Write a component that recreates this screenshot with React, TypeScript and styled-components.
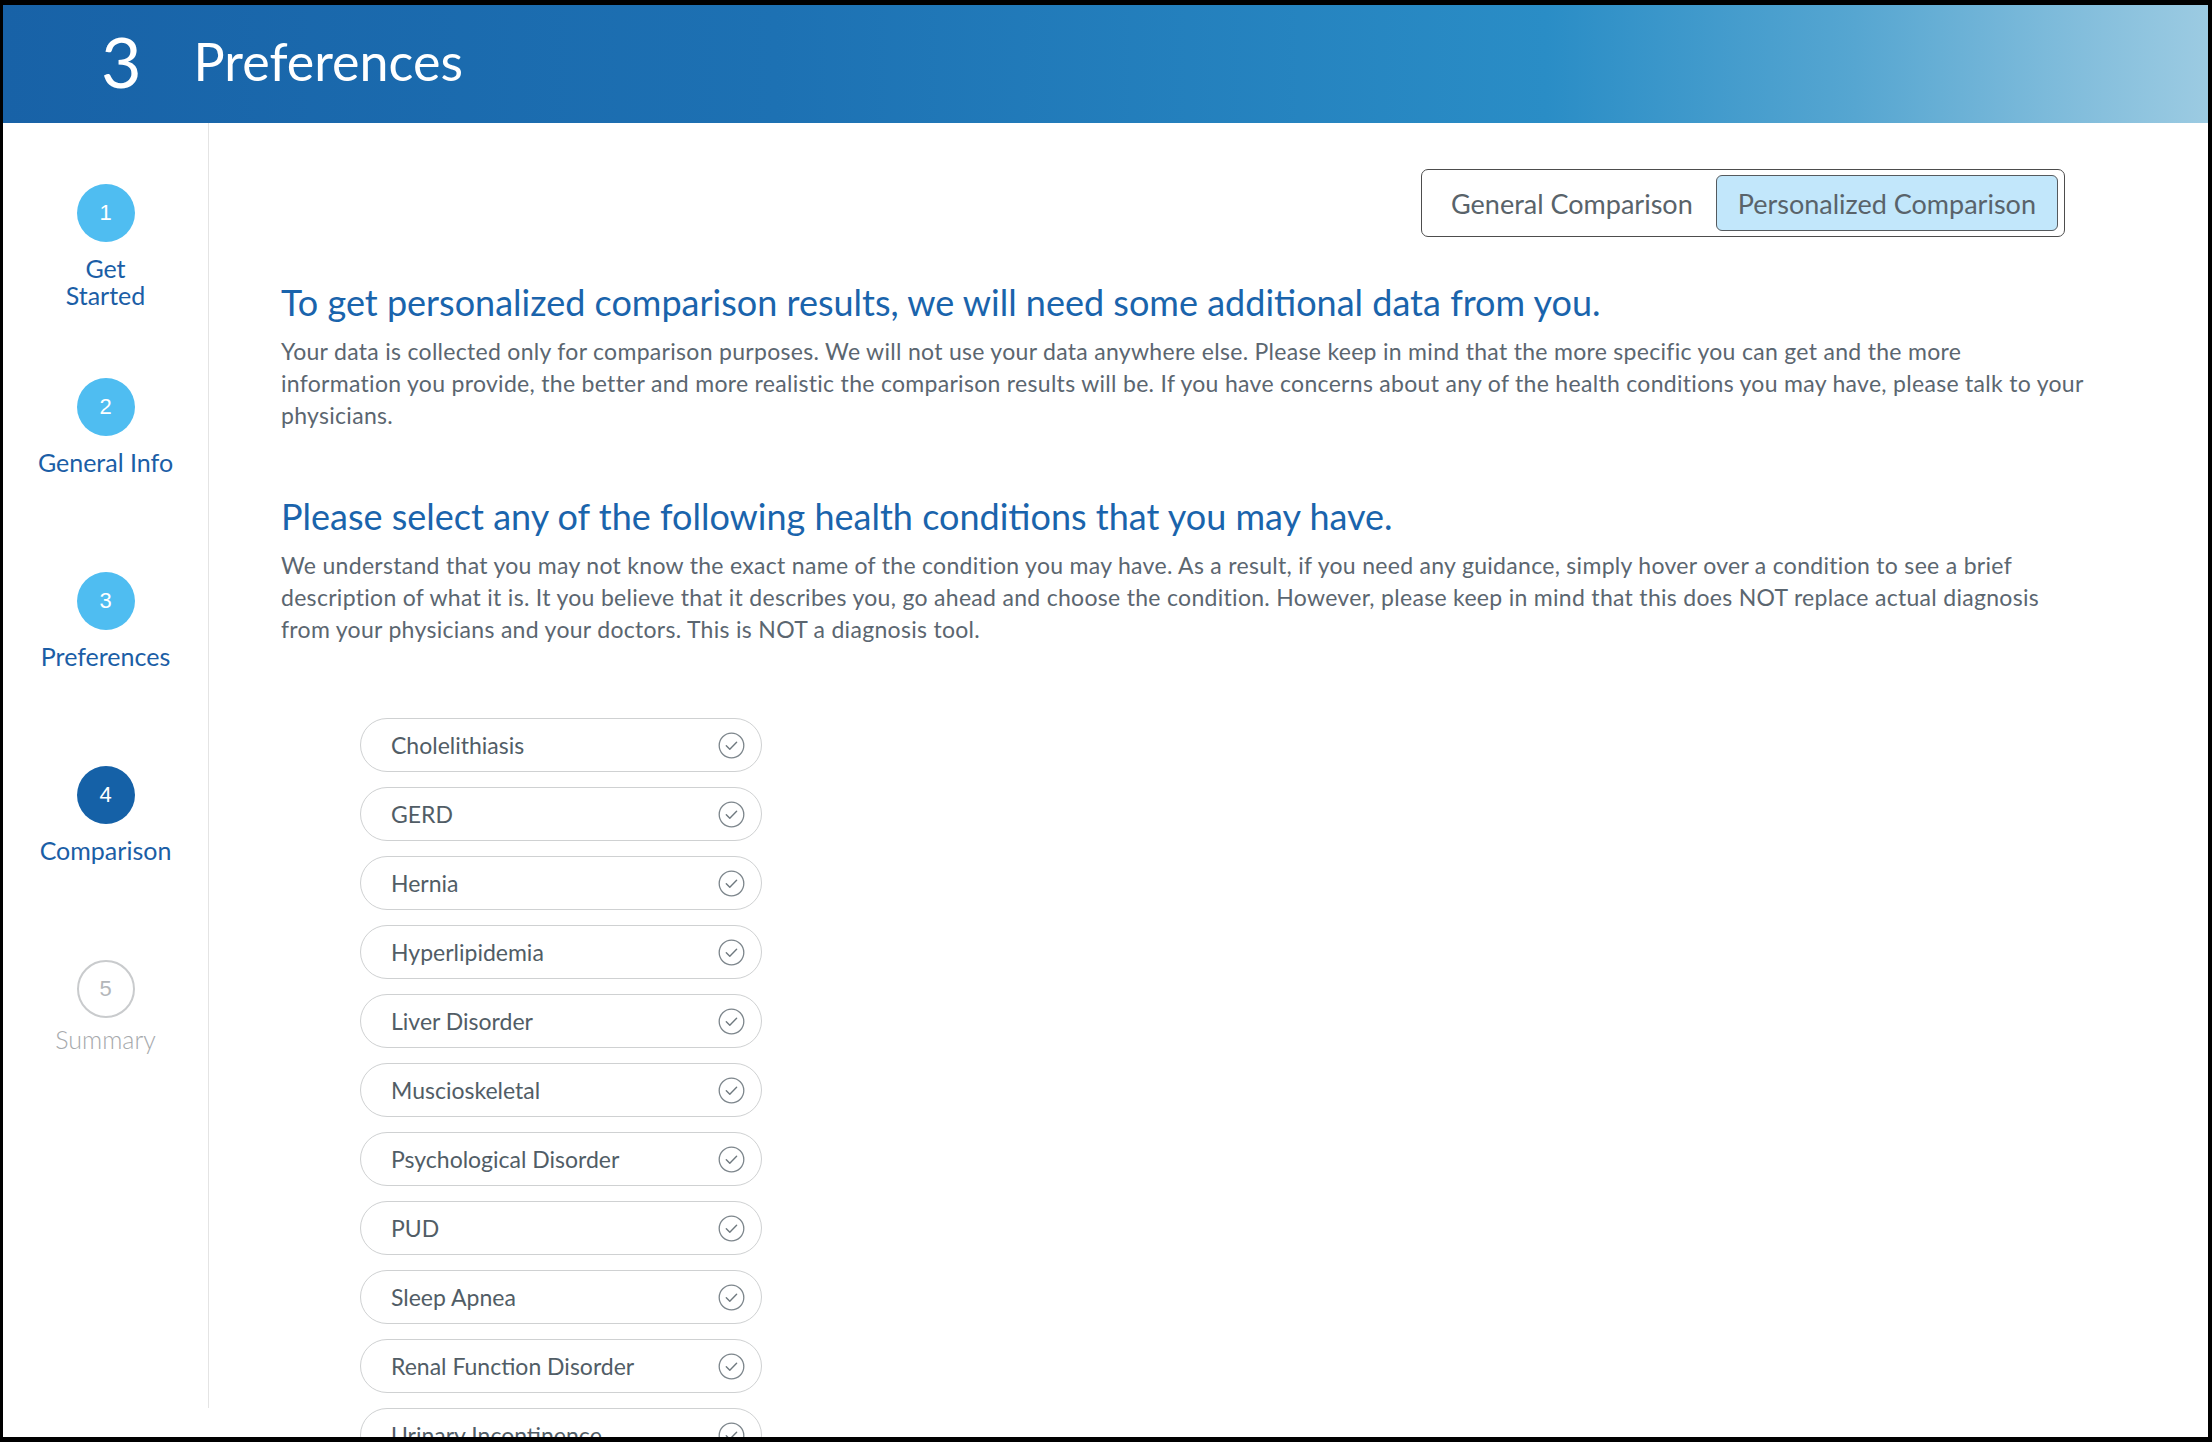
import React from 'react';
import styled, { createGlobalStyle } from 'styled-components';

const GlobalStyle = createGlobalStyle`
  html, body {
    margin: 0;
    padding: 0;
    height: 100%;
    background: #000;
  }
  body {
    overflow: hidden;
    font-family: 'Lato', 'Noto Sans', sans-serif;
  }
  #root {
    height: 100%;
  }
`;

const Frame = styled.div`
  height: 100vh;
  box-sizing: border-box;
  padding: 5px 4px 5px 3px;
  background: #000;
`;

const Panel = styled.div`
  height: 100%;
  background: #ffffff;
  overflow: hidden;
  display: flex;
  flex-direction: column;
`;

const Header = styled.header`
  height: 118px;
  flex-shrink: 0;
  box-sizing: border-box;
  display: flex;
  align-items: center;
  gap: 52px;
  padding: 0 0 7px 98px;
  background: linear-gradient(90deg, #1862a7 0%, #1d71b3 35%, #2a8dc6 70%, #56a6d1 84%, #9ccbe2 100%);
  color: #ffffff;
`;

const HeaderNumber = styled.span`
  font-size: 70px;
  line-height: 1;
  font-weight: 400;
`;

const HeaderTitle = styled.h1`
  margin: 0;
  font-size: 52px;
  line-height: 1;
  font-weight: 400;
`;

const Body = styled.div`
  display: flex;
  flex: 1;
  min-height: 0;
`;

const Sidebar = styled.nav`
  width: 206px;
  height: 1285px;
  flex-shrink: 0;
  box-sizing: border-box;
  border-right: 1.5px solid #e4e4e4;
  padding-top: 61px;
  display: flex;
  flex-direction: column;
  align-items: center;
`;

const Step = styled.div`
  height: 194px;
  display: flex;
  flex-direction: column;
  align-items: center;
`;

type StepState = 'done' | 'current' | 'todo';

const StepCircle = styled.div<{ $state: StepState }>`
  width: 58px;
  height: 58px;
  border-radius: 50%;
  box-sizing: border-box;
  display: flex;
  align-items: center;
  justify-content: center;
  font-family: 'Liberation Sans', Arial, sans-serif;
  font-size: 22px;
  background: ${p => (p.$state === 'done' ? '#4fbdf1' : p.$state === 'current' ? '#1561a7' : '#ffffff')};
  border: ${p => (p.$state === 'todo' ? '2px solid #c9cbcd' : 'none')};
  color: ${p => (p.$state === 'todo' ? '#b4b7ba' : '#ffffff')};
`;

const StepLabel = styled.div<{ $muted?: boolean }>`
  margin-top: ${p => (p.$muted ? 8 : 13)}px;
  font-size: 25px;
  line-height: 27px;
  text-align: center;
  font-weight: ${p => (p.$muted ? 300 : 400)};
  color: ${p => (p.$muted ? '#a6a9ac' : '#1b5ea6')};
`;

const Content = styled.main`
  flex: 1;
  box-sizing: border-box;
  padding: 46px 100px 0 72px;
`;

const ToggleRow = styled.div`
  display: flex;
  justify-content: flex-end;
  padding-right: 43px;
`;

const Toggle = styled.div`
  display: flex;
  align-items: stretch;
  height: 68px;
  box-sizing: border-box;
  padding: 5px 6px;
  border: 1.5px solid #4d4d4d;
  border-radius: 7px;
`;

const ToggleButton = styled.button<{ $active?: boolean }>`
  font-family: 'Lato', sans-serif;
  font-size: 27px;
  color: #59636a;
  padding: 0 ${p => (p.$active ? 21 : 22)}px;
  border-radius: 6px;
  cursor: pointer;
  background: ${p => (p.$active ? '#c2e7fb' : 'transparent')};
  border: ${p => (p.$active ? '1.5px solid #555a5e' : '1.5px solid transparent')};
`;

const Title = styled.h2<{ $top: number }>`
  margin: ${p => p.$top}px 0 13px;
  font-size: 36px;
  line-height: 40px;
  font-weight: 400;
  color: #1a64ac;
`;

const Paragraph = styled.p`
  margin: 0;
  font-size: 23px;
  line-height: 32px;
  letter-spacing: 0.3px;
  color: #5b6670;
  white-space: nowrap;
`;

const ConditionList = styled.ul`
  list-style: none;
  margin: 73px 0 0 79px;
  padding: 0;
  display: flex;
  flex-direction: column;
  gap: 15px;
`;

const Condition = styled.li`
  width: 402px;
  height: 54px;
  box-sizing: border-box;
  border: 1.5px solid #cfd1d2;
  border-radius: 27px;
  display: flex;
  align-items: center;
  justify-content: space-between;
  padding: 0 16px 0 30px;
  font-size: 23px;
  color: #515d66;
  cursor: pointer;
`;

const CheckIcon = () => (
  <svg width="27" height="27" viewBox="0 0 27 27" fill="none">
    <circle cx="13.5" cy="13.5" r="12.3" stroke="#7d868c" strokeWidth="1.3" />
    <path d="M8.3 13.8 L11.8 17.2 L18.6 10.2" stroke="#6f797f" strokeWidth="1.4" strokeLinecap="round" strokeLinejoin="round" />
  </svg>
);

const steps: { n: number; label: React.ReactNode; state: StepState }[] = [
  { n: 1, label: <>Get<br />Started</>, state: 'done' },
  { n: 2, label: 'General Info', state: 'done' },
  { n: 3, label: 'Preferences', state: 'done' },
  { n: 4, label: 'Comparison', state: 'current' },
  { n: 5, label: 'Summary', state: 'todo' },
];

const conditions = [
  'Cholelithiasis',
  'GERD',
  'Hernia',
  'Hyperlipidemia',
  'Liver Disorder',
  'Muscioskeletal',
  'Psychological Disorder',
  'PUD',
  'Sleep Apnea',
  'Renal Function Disorder',
  'Urinary Incontinence',
];

const App: React.FC = () => {
  return (
    <>
      <GlobalStyle />
      <Frame>
        <Panel>
          <Header>
            <HeaderNumber>3</HeaderNumber>
            <HeaderTitle>Preferences</HeaderTitle>
          </Header>
          <Body>
            <Sidebar>
              {steps.map(s => (
                <Step key={s.n}>
                  <StepCircle $state={s.state}>{s.n}</StepCircle>
                  <StepLabel $muted={s.state === 'todo'}>{s.label}</StepLabel>
                </Step>
              ))}
            </Sidebar>
            <Content>
              <ToggleRow>
                <Toggle>
                  <ToggleButton>General Comparison</ToggleButton>
                  <ToggleButton $active>Personalized Comparison</ToggleButton>
                </Toggle>
              </ToggleRow>

              <Title $top={45}>To get personalized comparison results, we will need some additional data from you.</Title>
              <Paragraph>
                Your data is collected only for comparison purposes. We will not use your data anywhere else. Please keep in mind that the more specific you can get and the more
                <br />
                information you provide, the better and more realistic the comparison results will be. If you have concerns about any of the health conditions you may have, please talk to your
                <br />
                physicians.
              </Paragraph>

              <Title $top={65}>Please select any of the following health conditions that you may have.</Title>
              <Paragraph>
                We understand that you may not know the exact name of the condition you may have. As a result, if you need any guidance, simply hover over a condition to see a brief
                <br />
                description of what it is. It you believe that it describes you, go ahead and choose the condition. However, please keep in mind that this does NOT replace actual diagnosis
                <br />
                from your physicians and your doctors. This is NOT a diagnosis tool.
              </Paragraph>

              <ConditionList>
                {conditions.map(c => (
                  <Condition key={c}>
                    {c}
                    <CheckIcon />
                  </Condition>
                ))}
              </ConditionList>
            </Content>
          </Body>
        </Panel>
      </Frame>
    </>
  );
};

export default App;
